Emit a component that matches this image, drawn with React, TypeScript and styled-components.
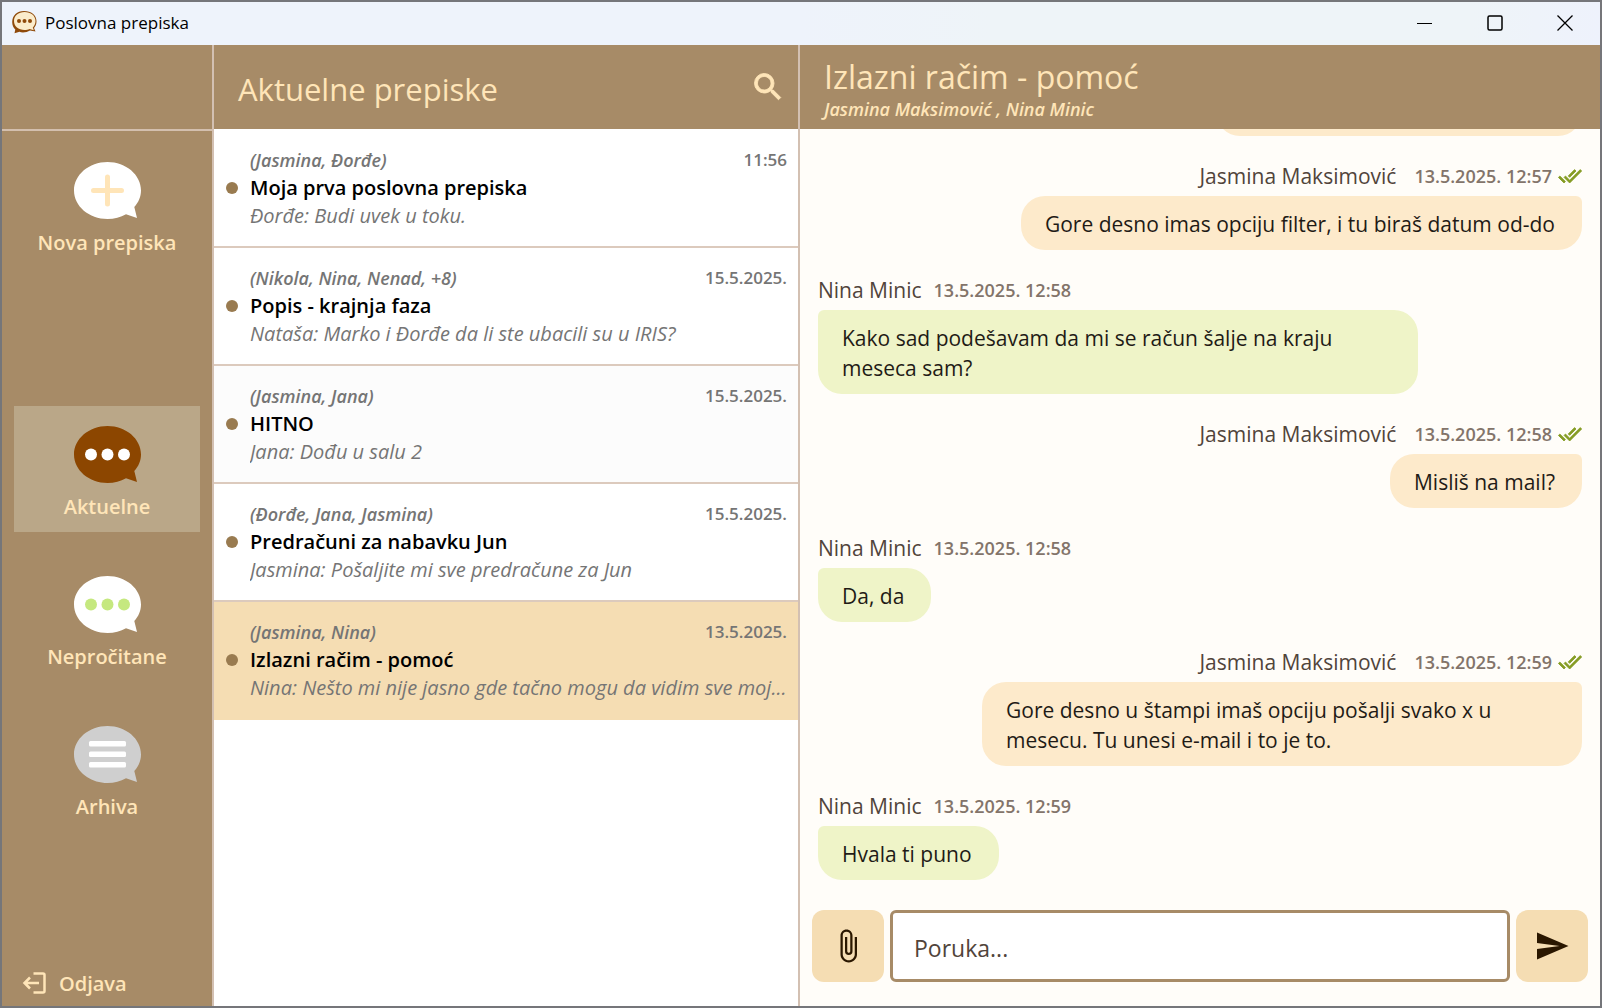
import React from "react";
import styled, { createGlobalStyle, css } from "styled-components";
import { MdAttachFile, MdDoneAll, MdSearch, MdSend } from "react-icons/md";

const Global = createGlobalStyle`
  *, *::before, *::after { box-sizing: border-box; }
  body {
    margin: 0;
    font-family: "Segoe UI", "Open Sans", "Noto Sans", sans-serif;
    color: #1f1b16;
  }
  button { font: inherit; border: 0; padding: 0; background: none; color: inherit; cursor: pointer; }
  h1, h2, h3, p, ul { margin: 0; padding: 0; font-weight: 400; }
  svg { display: block; flex: none; }
`;

const Window = styled.div`
  display: flex;
  flex-direction: column;
  height: 100vh;
  border: 2px solid #75767a;
  overflow: hidden;
`;

const TitleBar = styled.header`
  display: flex;
  align-items: center;
  flex: none;
  height: 43px;
  padding: 0 0 2px 10px;
  background: linear-gradient(90deg, #eef3fb 50%, #eef4f8 62%, #eef4f8 92%, #eef2fc);
  color: #000;
`;

const AppName = styled.span`
  flex: 1;
  margin-left: 8px;
  font-size: 17px;
  line-height: 24px;
`;

const WindowButton = styled.button`
  display: grid;
  place-items: center;
  width: 70px;
  height: 40px;
`;

const Body = styled.div`
  display: grid;
  grid-template-columns: 212px 586px minmax(0, 1fr);
  grid-template-rows: minmax(0, 1fr);
  flex: 1;
  min-height: 0;
`;

const Sidebar = styled.nav`
  display: flex;
  flex-direction: column;
  background: #a78b67;
  border-right: 2px solid #d3c0b2;
  color: #ffe5b8;
`;

const SidebarTop = styled.div`
  flex: none;
  height: 86px;
  border-bottom: 2px solid #d3bfae;
`;

const NavGroup = styled.div`
  display: flex;
  flex-direction: column;
  gap: 24px;
  padding: 11px 12px 0;
  & + & { padding-top: 138px; }
`;

const NavButton = styled.button<{ $active?: boolean }>`
  display: flex;
  flex-direction: column;
  align-items: center;
  height: 126px;
  padding-top: 20px;
  background: ${(p) => (p.$active ? "#baa788" : "transparent")};
  font-size: 20px;
  font-weight: 600;
  line-height: 28px;
  gap: 10px;
`;

const Logout = styled.button`
  display: flex;
  align-items: center;
  gap: 12px;
  margin-top: auto;
  padding: 8px 20px;
  font-size: 20px;
  font-weight: 600;
  line-height: 28px;
`;

const ListPane = styled.section`
  display: flex;
  flex-direction: column;
  min-width: 0;
  background: #fff;
  border-right: 2px solid #d3c0b2;
`;

const paneHeader = css`
  flex: none;
  height: 84px;
  background: #a78b67;
  color: #ffe5b8;
`;

const PaneTitle = styled.h2`
  font-size: 32px;
  line-height: 44px;
`;

const ListHeader = styled.header`
  ${paneHeader}
  display: flex;
  align-items: center;
  justify-content: space-between;
  padding: 0 12px 0 24px;
  ${PaneTitle} { padding-top: 4px; font-size: 31px; }
`;

const IconButton = styled.button`
  display: grid;
  place-items: center;
  path[fill="none"] { display: none; }
  svg { stroke: currentColor; stroke-width: 0.6px; }
`;

const List = styled.ul`
  padding-top: 1px;
  list-style: none;
`;

const ListItem = styled.li`
  height: 118px;
  border-bottom: 2px solid #dccabd;
  &:last-child { border-bottom: 0; }
`;

const Thread = styled.button<{ $tone: "plain" | "hover" | "selected" }>`
  display: grid;
  grid-template-columns: 12px minmax(0, 1fr);
  column-gap: 12px;
  align-items: center;
  align-content: start;
  width: 100%;
  height: 100%;
  padding: 16px 11px 0 12px;
  text-align: left;
  background: ${(p) => ({ plain: "#fff", hover: "#fcfcfc", selected: "#f5ddb3" })[p.$tone]};
`;

const Dot = styled.span`
  width: 12px;
  height: 12px;
  border-radius: 50%;
  background: #997b50;
`;

const ThreadText = styled.span`
  display: flex;
  flex-direction: column;
  line-height: 28px;
`;

const ThreadMeta = styled.span`
  display: flex;
  justify-content: space-between;
  font-size: 17px;
  font-weight: 600;
  color: #757575;
  em { font-size: 18px; }
`;

const ThreadTitle = styled.span`
  font-size: 20px;
  font-weight: 600;
  color: #000;
`;

const Preview = styled.span`
  overflow: hidden;
  white-space: nowrap;
  text-overflow: ellipsis;
  font-size: 20px;
  font-style: italic;
  color: #757575;
`;

const Chat = styled.main`
  display: flex;
  flex-direction: column;
  min-width: 0;
  background: #fffdf9;
`;

const ChatHeader = styled.header`
  ${paneHeader}
  padding: 10px 24px 0;
`;

const Members = styled.p`
  font-size: 18px;
  font-weight: 600;
  font-style: italic;
  line-height: 20px;
`;

const Messages = styled.div`
  display: flex;
  flex-direction: column;
  justify-content: flex-end;
  flex: 1;
  min-height: 0;
  gap: 26px;
  padding: 0 18px;
  overflow: hidden;
`;

const Message = styled.article<{ $own: boolean }>`
  display: flex;
  flex-direction: column;
  flex: none;
  gap: 6px;
  align-items: ${(p) => (p.$own ? "flex-end" : "flex-start")};
`;

const MessageMeta = styled.div<{ $own: boolean }>`
  display: flex;
  align-items: center;
  font-size: 21px;
  line-height: 28px;
  color: #51443b;
  time {
    margin-left: ${(p) => (p.$own ? 18 : 12)}px;
    margin-right: 6px;
    font-size: 18px;
    font-weight: 600;
    color: #83746a;
  }
  svg { color: #859c23; stroke: currentColor; stroke-width: 0.8px; }
  path[fill="none"] { display: none; }
`;

const Bubble = styled.p<{ $own: boolean }>`
  max-width: 600px;
  padding: 13px 27px 11px 24px;
  border-radius: ${(p) => (p.$own ? "24px 6px 24px 24px" : "6px 24px 24px 24px")};
  background: ${(p) => (p.$own ? "#fdeacb" : "#eff4c8")};
  font-size: 21px;
  line-height: 30px;
`;

const EarlierBubble = styled(Bubble)`
  flex: none;
  align-self: flex-end;
  width: 366px;
  height: 54px;
`;

const Composer = styled.form`
  display: flex;
  flex: none;
  gap: 6px;
  padding: 30px 12px 24px;
`;

const ComposerButton = styled.button`
  display: grid;
  place-items: center;
  width: 72px;
  height: 72px;
  border-radius: 12px;
  background: #f5ddb3;
  color: #2a1700;
`;

const MessageInput = styled.input`
  flex: 1;
  min-width: 0;
  height: 72px;
  padding: 4px 21px 0;
  border: 3px solid #a78b67;
  border-radius: 6px;
  background: #fff;
  font: inherit;
  font-size: 23px;
  outline: none;
  &::placeholder { color: #51443b; opacity: 1; }
`;

type BubbleKind = "plus" | "dots" | "lines";

function SpeechIcon({ kind, fill, ink }: { kind: BubbleKind; fill: string; ink: string }) {
  return (
    <svg width="67" height="57" viewBox="0 0 67 57" aria-hidden="true">
      <path
        fill={fill}
        d="M33.500 0C52 0 67 12.800 67 28.500C67 34.500 64.500 40.500 60.300 45L63 56L52 52.300C46.500 55.500 40.500 57 33.500 57C15 57 0 44.200 0 28.500S15 0 33.500 0Z"
      />
      {kind === "plus" && (
        <path d="M33.500 15v27M19.500 28.500h28" stroke={ink} strokeWidth="5" strokeLinecap="round" />
      )}
      {kind === "dots" && [17, 33.5, 50].map((x) => <circle key={x} cx={x} cy="28.500" r="6" fill={ink} />)}
      {kind === "lines" &&
        [15, 25.5, 36].map((y) => <rect key={y} x="15" y={y} width="37" height="5.500" rx="1.500" fill={ink} />)}
    </svg>
  );
}

function AppLogo() {
  return (
    <svg width="25" height="23" viewBox="0 0 25 23" aria-hidden="true">
      <path
        fill="#8f4a0a"
        d="M12 0C19 0 24.500 4 24.500 10.500C24.500 13.500 23.300 15.500 22 17L23.500 20.500L18 19.500C15 21.500 10 22 7.500 20.800L2.500 22.300L3.300 18.500C1.300 16.500 .2 14 .2 11C.2 4.500 5 0 12 0Z"
      />
      <path
        fill="#fbeccb"
        d="M12.500 1C19 1 23.500 4.800 23.500 10C23.500 12.800 22.300 15 20.800 16.500L21.800 19.300L17.600 18C16 18.700 14.500 19 12.500 19C6.500 19 2 15.300 2 10S6.500 1 12.500 1Z"
      />
      {[7, 12.5, 18].map((x) => (
        <circle key={x} cx={x} cy="10" r="2" fill="#8f4a0a" />
      ))}
    </svg>
  );
}

const threads = [
  { people: "(Jasmina, Đorđe)", date: "11:56", title: "Moja prva poslovna prepiska", preview: "Đorđe: Budi uvek u toku.", tone: "plain" },
  { people: "(Nikola, Nina, Nenad, +8)", date: "15.5.2025.", title: "Popis - krajnja faza", preview: "Nataša: Marko i Đorđe da li ste ubacili su u IRIS?", tone: "plain" },
  { people: "(Jasmina, Jana)", date: "15.5.2025.", title: "HITNO", preview: "Jana: Dođu u salu 2", tone: "hover" },
  { people: "(Đorđe, Jana, Jasmina)", date: "15.5.2025.", title: "Predračuni za nabavku Jun", preview: "Jasmina: Pošaljite mi sve predračune za Jun", tone: "plain" },
  { people: "(Jasmina, Nina)", date: "13.5.2025.", title: "Izlazni račim - pomoć", preview: "Nina: Nešto mi nije jasno gde tačno mogu da vidim sve moj...", tone: "selected" },
] as const;

const messages = [
  { own: true, time: "13.5.2025. 12:57", text: "Gore desno imas opciju filter, i tu biraš datum od-do" },
  { own: false, time: "13.5.2025. 12:58", text: "Kako sad podešavam da mi se račun šalje na kraju meseca sam?" },
  { own: true, time: "13.5.2025. 12:58", text: "Misliš na mail?" },
  { own: false, time: "13.5.2025. 12:58", text: "Da, da" },
  { own: true, time: "13.5.2025. 12:59", text: "Gore desno u štampi imaš opciju pošalji svako x u mesecu. Tu unesi e-mail i to je to." },
  { own: false, time: "13.5.2025. 12:59", text: "Hvala ti puno" },
];

export default function App() {
  return (
    <>
      <Global />
      <Window>
        <TitleBar>
          <AppLogo />
          <AppName>Poslovna prepiska</AppName>
          <WindowButton aria-label="Minimize">
            <svg width="16" height="16" viewBox="0 0 16 16"><path d="M0 8.500h15" stroke="#000" /></svg>
          </WindowButton>
          <WindowButton aria-label="Maximize">
            <svg width="16" height="16" viewBox="0 0 16 16"><rect x="1" y="1" width="14" height="14" rx="1.500" fill="none" stroke="#000" strokeWidth="1.500" /></svg>
          </WindowButton>
          <WindowButton aria-label="Close">
            <svg width="16" height="16" viewBox="0 0 16 16"><path d="M.5.5l15 15M15.500.5l-15 15" stroke="#000" strokeWidth="1.300" /></svg>
          </WindowButton>
        </TitleBar>
        <Body>
          <Sidebar>
            <SidebarTop />
            <NavGroup>
              <NavButton><SpeechIcon kind="plus" fill="#fff" ink="#ffe5b8" />Nova prepiska</NavButton>
            </NavGroup>
            <NavGroup>
              <NavButton $active><SpeechIcon kind="dots" fill="#8c4600" ink="#fff" />Aktuelne</NavButton>
              <NavButton><SpeechIcon kind="dots" fill="#fff" ink="#c5e87f" />Nepročitane</NavButton>
              <NavButton><SpeechIcon kind="lines" fill="#cfcfcf" ink="#fff" />Arhiva</NavButton>
            </NavGroup>
            <Logout>
              <svg width="25" height="24" viewBox="0 0 25 24" fill="none" stroke="currentColor" strokeWidth="2.500" aria-hidden="true">
                <path d="M11.500 1.500H21Q22.500 1.500 22.500 3V19Q22.500 20.500 21 20.500H11.500M17 11H2.500M8 5.500L2.500 11L8 16.500" />
              </svg>
              Odjava
            </Logout>
          </Sidebar>
          <ListPane>
            <ListHeader>
              <PaneTitle>Aktuelne prepiske</PaneTitle>
              <IconButton aria-label="Pretraga"><MdSearch size={36} /></IconButton>
            </ListHeader>
            <List>
              {threads.map((t) => (
                <ListItem key={t.title}>
                  <Thread $tone={t.tone}>
                    <Dot />
                    <ThreadText>
                      <ThreadMeta><em>{t.people}</em><span>{t.date}</span></ThreadMeta>
                      <ThreadTitle>{t.title}</ThreadTitle>
                      <Preview>{t.preview}</Preview>
                    </ThreadText>
                  </Thread>
                </ListItem>
              ))}
            </List>
          </ListPane>
          <Chat>
            <ChatHeader>
              <PaneTitle>Izlazni račim - pomoć</PaneTitle>
              <Members>Jasmina Maksimović , Nina Minic</Members>
            </ChatHeader>
            <Messages>
              <EarlierBubble $own />
              {messages.map((m) => (
                <Message key={m.text} $own={m.own}>
                  <MessageMeta $own={m.own}>
                    {m.own ? "Jasmina Maksimović" : "Nina Minic"}
                    <time>{m.time}</time>
                    {m.own && <MdDoneAll size={24} />}
                  </MessageMeta>
                  <Bubble $own={m.own}>{m.text}</Bubble>
                </Message>
              ))}
            </Messages>
            <Composer onSubmit={(e) => e.preventDefault()}>
              <ComposerButton type="button" aria-label="Priloži"><MdAttachFile size={36} /></ComposerButton>
              <MessageInput aria-label="Poruka" placeholder="Poruka..." />
              <ComposerButton type="submit" aria-label="Pošalji"><MdSend size={36} /></ComposerButton>
            </Composer>
          </Chat>
        </Body>
      </Window>
    </>
  );
}
